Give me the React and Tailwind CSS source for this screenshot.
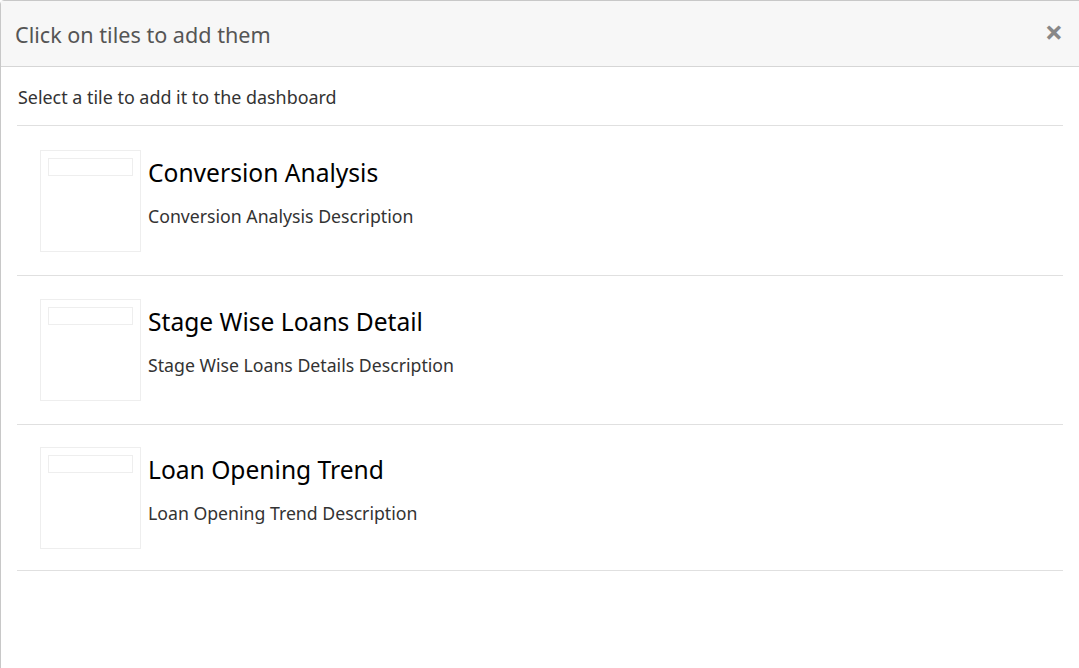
const tiles = [
  { title: "Conversion Analysis", desc: "Conversion Analysis Description", row: "pt-[24px] h-[150px]" },
  { title: "Stage Wise Loans Detail", desc: "Stage Wise Loans Details Description", row: "pt-[23px] h-[149px]" },
  { title: "Loan Opening Trend", desc: "Loan Opening Trend Description", row: "pt-[22px] h-[146px]" },
];

const TileRow = ({ title, desc, row }) => {
  return (
    <div className={`flex items-start pl-[23px] border-b border-[#e0e0e0] cursor-pointer ${row}`}>
      <div className="w-[101px] h-[102px] border border-[#eeeeee] p-[7px] shrink-0">
        <div className="h-[18px] border border-[#eeeeee]" />
      </div>
      <div className="flex flex-col pl-[7px] pt-[6px]">
        <h4 className="text-[24.6px] leading-[34px] text-black">{title}</h4>
        <p className="text-[17.7px] leading-[24px] text-[#333] mt-[14px]">{desc}</p>
      </div>
    </div>
  );
};

export default function App() {
  return (
    <div
      className="w-[1079px] h-[668px] overflow-hidden bg-white"
      style={{ fontFamily: '"Noto Sans", "Open Sans", sans-serif' }}
    >
      <div className="w-[1085px] h-[700px] border border-[#c8c8c8] rounded-[4px] bg-white">
        <div className="h-[66px] bg-[#f7f7f7] border-b border-[#d6d6d6] flex items-center justify-between pl-[14px] pr-[21px]">
          <span className="text-[21.6px] text-[#555] pt-[3px]">Click on tiles to add them</span>
          <span className="text-[32px] font-bold text-[#888] leading-none pb-[4px]">×</span>
        </div>
        <div className="pl-[16px]">
          <div className="w-[1046px]">
            <div className="h-[59px] border-b border-[#e0e0e0] flex items-center pl-[1px] pt-[2px]">
              <span className="text-[17.9px] text-[#333]">Select a tile to add it to the dashboard</span>
            </div>
            {tiles.map((t) => (
              <TileRow key={t.title} title={t.title} desc={t.desc} row={t.row} />
            ))}
          </div>
        </div>
      </div>
    </div>
  );
}
